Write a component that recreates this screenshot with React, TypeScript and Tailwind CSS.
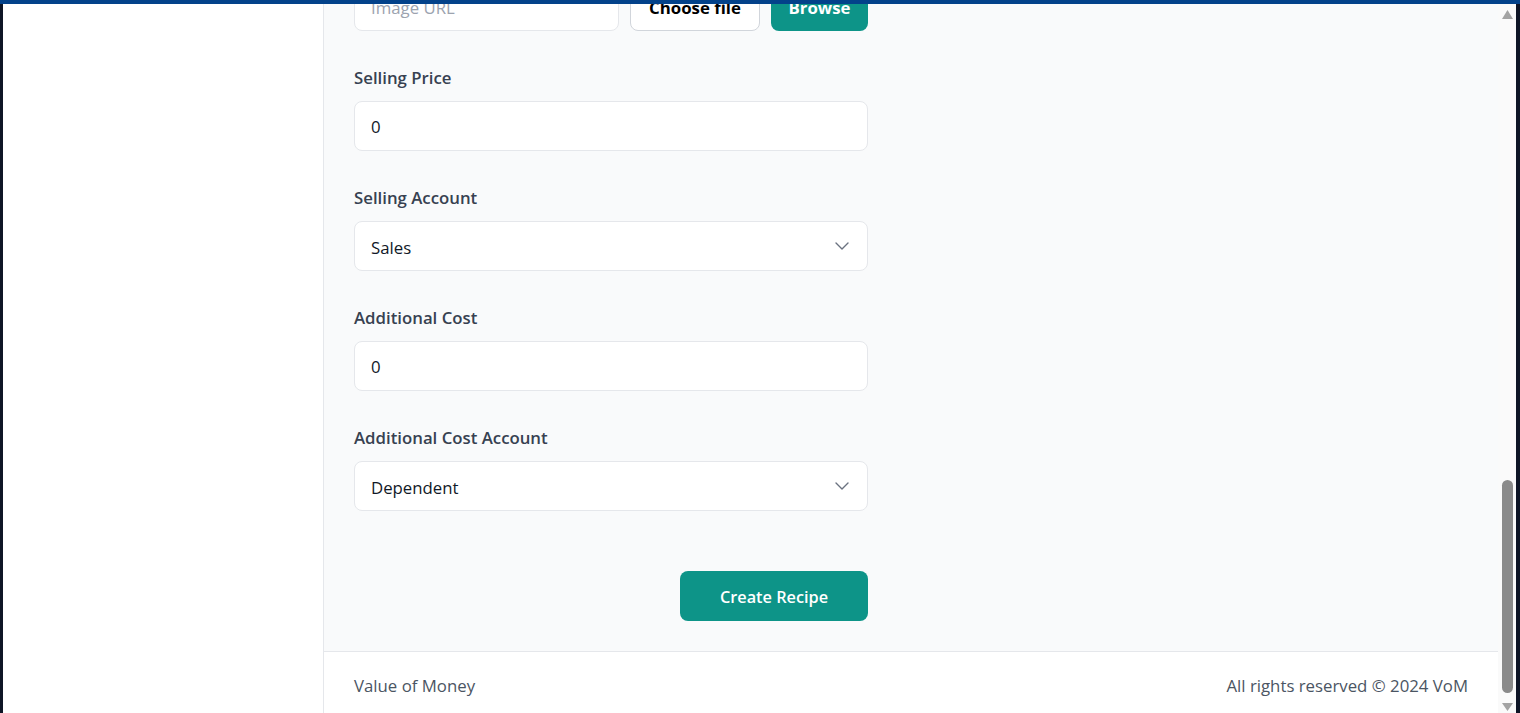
import { ChevronDown } from "lucide-react"

const font = { fontFamily: '"Open Sans", "Noto Sans", sans-serif' }

function Field({ label, children }: { label: string; children: React.ReactNode }) {
  return (
    <div className="flex flex-col gap-[11px]">
      <label className="text-[16.8px] leading-6 font-semibold text-[#374151]">{label}</label>
      {children}
    </div>
  )
}

function TextInput({ value }: { value: string }) {
  return (
    <div className="h-[50px] w-full rounded-lg border border-[#e5e7eb] bg-white px-4 pt-[2px] flex items-center text-[16.8px] text-[#111827]">
      {value}
    </div>
  )
}

function Select({ value }: { value: string }) {
  return (
    <div className="h-[50px] w-full rounded-lg border border-[#e5e7eb] bg-white pl-4 pr-[13px] flex items-center justify-between text-[16.8px] text-[#111827]">
      <span className="pt-[3px]">{value}</span>
      <ChevronDown size={24} strokeWidth={1.4} className="text-[#6b7280]" />
    </div>
  )
}

export default function App() {
  return (
    <div className="w-[1520px] h-[713px] overflow-hidden flex flex-col bg-[#0e1526]" style={font}>
      <div className="h-[4px] bg-[#03428a] shrink-0" />
      <div className="flex flex-1 min-h-0 pl-[3px] pr-[4px]">
        <aside className="w-[321px] shrink-0 bg-white border-r border-[#e5e7eb]" />

        <main className="flex-1 min-w-0 flex flex-col bg-[#f9fafb] overflow-hidden">
          <div className="px-[30px] mt-[-23px] pb-[30px]">
            <div className="w-[514px] flex flex-col gap-[35px]">
              <div className="flex gap-[11px] h-[50px]">
                <div className="flex-1 rounded-lg border border-[#e5e7eb] bg-white px-4 pt-[3px] flex items-center text-[16.8px] text-[#9ca3af]">
                  Image URL
                </div>
                <button className="w-[130px] rounded-lg border border-[#d1d5db] bg-white pt-[3px] text-[16.8px] font-bold text-black">
                  Choose file
                </button>
                <button className="w-[97px] rounded-lg bg-[#0d9488] pt-[3px] text-[16.8px] font-bold text-white">
                  Browse
                </button>
              </div>

              <div className="flex flex-col gap-[35px]">
                <Field label="Selling Price">
                  <TextInput value="0" />
                </Field>
                <Field label="Selling Account">
                  <Select value="Sales" />
                </Field>
                <Field label="Additional Cost">
                  <TextInput value="0" />
                </Field>
                <Field label="Additional Cost Account">
                  <Select value="Dependent" />
                </Field>
              </div>

              <div className="flex justify-end mt-[25px]">
                <button className="w-[188px] h-[50px] rounded-lg bg-[#0d9488] pt-[2px] text-[16.3px] font-semibold text-white">
                  Create Recipe
                </button>
              </div>
            </div>
          </div>

          <footer className="shrink-0 border-t border-[#e5e7eb] bg-white px-[30px] pt-[22px] pb-6 flex justify-between text-[16.8px] leading-6 text-[#4b5563]">
            <span>Value of Money</span>
            <span>All rights reserved © 2024 VoM</span>
          </footer>
        </main>

        <div className="w-[18px] shrink-0 bg-[#fafafa] flex flex-col items-center">
          <svg width="11" height="9" viewBox="0 0 11 9" className="mt-[6px]">
            <polygon points="5.5,0 11,9 0,9" fill="#a3a3a3" />
          </svg>
          <div className="flex-1" />
          <div className="w-[11px] h-[213px] rounded-full bg-[#8a8a8a]" />
          <svg width="11" height="8" viewBox="0 0 11 8" className="mt-[10px] mb-[2px]">
            <polygon points="0,0 11,0 5.5,8" fill="#a3a3a3" />
          </svg>
        </div>
      </div>
    </div>
  )
}
